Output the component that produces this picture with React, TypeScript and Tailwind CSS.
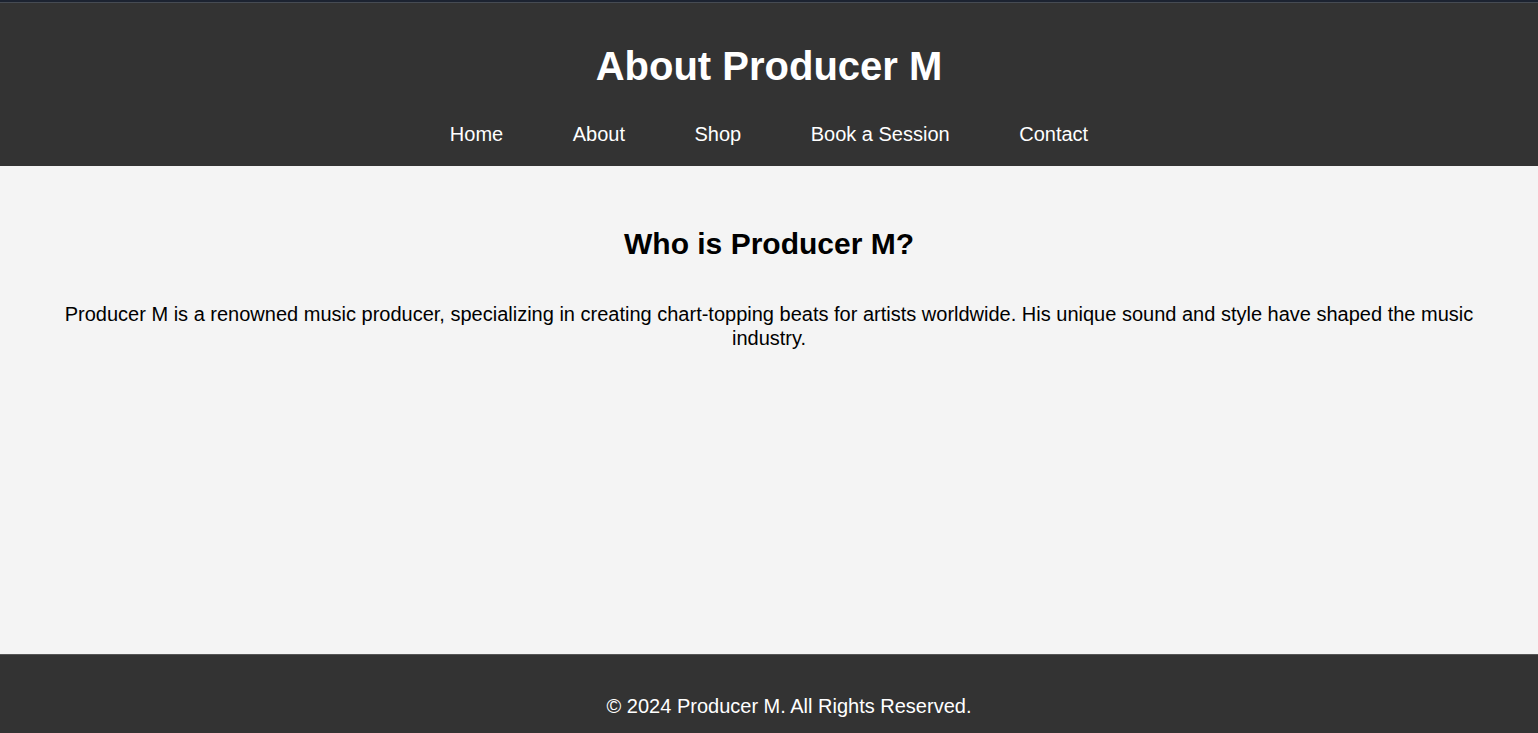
import React from 'react'

const links = ['Home', 'About', 'Shop', 'Book a Session', 'Contact']

export default function App() {
  return (
    <div className="flex h-[733px] flex-col overflow-hidden font-['Liberation_Sans',Arial,sans-serif]">
      <header className="border-t-2 border-[#1c2331] bg-[#333333] text-white">
        <div className="h-px bg-[#464b53]" />
        <h1 className="pt-[40px] text-center text-[40px] leading-[46px] font-bold">About Producer M</h1>
        <nav className="pt-[34px] pb-[20px]">
          <ul className="flex justify-center gap-[69.5px]">
            {links.map((link) => (
              <li key={link} className="text-[20px] leading-[23px]">
                <a href="#" className="text-white">
                  {link}
                </a>
              </li>
            ))}
          </ul>
        </nav>
      </header>

      <main className="h-[488px] shrink-0 bg-[#f4f4f4] px-[40px] pt-[61px] text-center text-black">
        <h2 className="text-[30px] leading-[34px] font-bold">Who is Producer M?</h2>
        <p className="mt-[41px] text-[20px] leading-[24px]">
          Producer M is a renowned music producer, specializing in creating chart-topping beats for artists
          worldwide. His unique sound and style have shaped the music industry.
        </p>
      </main>

      <footer className="flex-1 border-t border-[#565656] bg-[#333333] pt-[40px] pl-[40px] text-center text-white">
        <p className="text-[20px] leading-[23px]">&copy; 2024 Producer M. All Rights Reserved.</p>
      </footer>
    </div>
  )
}
